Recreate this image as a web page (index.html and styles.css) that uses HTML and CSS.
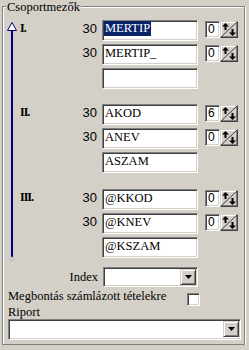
FILE: index.html
```html
<!DOCTYPE html>
<html lang="hu">

<head>
    <meta charset="UTF-8" />
    <title>Csoportmezők</title>
    <link rel="stylesheet" href="styles.css">
</head>

<body>
    <div class="frame">
        <span class="legend">Csoportmezők</span>

        <div class="groups">
            <div class="order">
                <svg class="order-head" width="17" height="9" viewBox="0 0 17 9">
                    <polygon points="9,0.5 13.5,8.5 4.5,8.5" fill="#fff" stroke="#000080" />
                </svg>
                <div class="order-line"></div>
                <svg class="order-end" width="7" height="6" viewBox="0 0 7 6">
                    <circle cx="3.5" cy="3" r="2" fill="none" stroke="#a8a8a8" stroke-dasharray="1 1" />
                </svg>
            </div>

            <div class="sections">
                <div class="section">
                    <b class="roman">I.</b>
                    <span class="num">30</span>
                    <div class="field sunken"><span class="sel">MERTIP</span></div>
                    <div class="spin">
                        <div class="spin-val sunken">0</div>
                        <div class="spin-btn raised">
                            <svg width="16" height="15" viewBox="0 0 16 15">
                                <line x1="0" y1="15" x2="16" y2="0" stroke="#404040" />
                                <polygon points="1,4.5 4.5,1 8,4.5" fill="#000" />
                                <rect x="3.5" y="4" width="2" height="4" fill="#000" />
                                <polygon points="8,10.5 11.5,14 15,10.5" fill="#000" />
                                <rect x="10.5" y="7" width="2" height="4" fill="#000" />
                            </svg>
                        </div>
                    </div>

                    <span class="num">30</span>
                    <div class="field sunken">MERTIP_</div>
                    <div class="spin">
                        <div class="spin-val sunken">0</div>
                        <div class="spin-btn raised">
                            <svg width="16" height="15" viewBox="0 0 16 15">
                                <line x1="0" y1="15" x2="16" y2="0" stroke="#404040" />
                                <polygon points="1,4.5 4.5,1 8,4.5" fill="#000" />
                                <rect x="3.5" y="4" width="2" height="4" fill="#000" />
                                <polygon points="8,10.5 11.5,14 15,10.5" fill="#000" />
                                <rect x="10.5" y="7" width="2" height="4" fill="#000" />
                            </svg>
                        </div>
                    </div>

                    <div class="field sunken"></div>
                </div>

                <div class="section">
                    <b class="roman">II.</b>
                    <span class="num">30</span>
                    <div class="field sunken">AKOD</div>
                    <div class="spin">
                        <div class="spin-val sunken">6</div>
                        <div class="spin-btn raised">
                            <svg width="16" height="15" viewBox="0 0 16 15">
                                <line x1="0" y1="15" x2="16" y2="0" stroke="#404040" />
                                <polygon points="1,4.5 4.5,1 8,4.5" fill="#000" />
                                <rect x="3.5" y="4" width="2" height="4" fill="#000" />
                                <polygon points="8,10.5 11.5,14 15,10.5" fill="#000" />
                                <rect x="10.5" y="7" width="2" height="4" fill="#000" />
                            </svg>
                        </div>
                    </div>

                    <span class="num">30</span>
                    <div class="field sunken">ANEV</div>
                    <div class="spin">
                        <div class="spin-val sunken">0</div>
                        <div class="spin-btn raised">
                            <svg width="16" height="15" viewBox="0 0 16 15">
                                <line x1="0" y1="15" x2="16" y2="0" stroke="#404040" />
                                <polygon points="1,4.5 4.5,1 8,4.5" fill="#000" />
                                <rect x="3.5" y="4" width="2" height="4" fill="#000" />
                                <polygon points="8,10.5 11.5,14 15,10.5" fill="#000" />
                                <rect x="10.5" y="7" width="2" height="4" fill="#000" />
                            </svg>
                        </div>
                    </div>

                    <div class="field sunken">ASZAM</div>
                </div>

                <div class="section">
                    <b class="roman">III.</b>
                    <span class="num">30</span>
                    <div class="field sunken">@KKOD</div>
                    <div class="spin">
                        <div class="spin-val sunken">0</div>
                        <div class="spin-btn raised">
                            <svg width="16" height="15" viewBox="0 0 16 15">
                                <line x1="0" y1="15" x2="16" y2="0" stroke="#404040" />
                                <polygon points="1,4.5 4.5,1 8,4.5" fill="#000" />
                                <rect x="3.5" y="4" width="2" height="4" fill="#000" />
                                <polygon points="8,10.5 11.5,14 15,10.5" fill="#000" />
                                <rect x="10.5" y="7" width="2" height="4" fill="#000" />
                            </svg>
                        </div>
                    </div>

                    <span class="num">30</span>
                    <div class="field sunken">@KNEV</div>
                    <div class="spin">
                        <div class="spin-val sunken">0</div>
                        <div class="spin-btn raised">
                            <svg width="16" height="15" viewBox="0 0 16 15">
                                <line x1="0" y1="15" x2="16" y2="0" stroke="#404040" />
                                <polygon points="1,4.5 4.5,1 8,4.5" fill="#000" />
                                <rect x="3.5" y="4" width="2" height="4" fill="#000" />
                                <polygon points="8,10.5 11.5,14 15,10.5" fill="#000" />
                                <rect x="10.5" y="7" width="2" height="4" fill="#000" />
                            </svg>
                        </div>
                    </div>

                    <div class="field sunken">@KSZAM</div>
                </div>
            </div>
        </div>

        <div class="index-row">
            <span class="index-label">Index</span>
            <div class="combo combo-index sunken">
                <div class="drop raised">
                    <svg width="7" height="4" viewBox="0 0 7 4"><polygon points="0,0 7,0 3.5,4" fill="#000" /></svg>
                </div>
            </div>
        </div>

        <div class="check-row">
            <span class="check-label">Megbontás számlázott tételekre</span>
            <div class="checkbox sunken"></div>
        </div>

        <div class="report-label">Riport</div>
        <div class="combo combo-report sunken">
            <div class="drop raised">
                <svg width="7" height="4" viewBox="0 0 7 4"><polygon points="0,0 7,0 3.5,4" fill="#000" /></svg>
            </div>
        </div>
    </div>
</body>

</html>
```

FILE: styles.css
```css
body {
    margin: 0;
    background-color: #d4d0c8;
    color: #000;
    font-family: "Liberation Serif", "Times New Roman", serif;
    font-size: 12.5px;
}

/* etched group frame */
.frame {
    position: relative;
    box-sizing: border-box;
    width: 243px;
    margin: 6px 0 0 2px;
    padding: 13px 3px 4px 0;
    border: 1px solid #808080;
    box-shadow: inset 1px 1px 0 #fff, 1px 1px 0 #fff;
}

.legend {
    position: absolute;
    top: -7px;
    left: 3px;
    padding: 0 1px;
    line-height: 15px;
    background-color: #d4d0c8;
}

/* win classic 3d borders */
.sunken {
    box-sizing: border-box;
    background-color: #fff;
    border: 1px solid;
    border-color: #808080 #fff #fff #808080;
    box-shadow: inset 1px 1px 0 #404040, inset -1px -1px 0 #d4d0c8;
}

.raised {
    box-sizing: border-box;
    background-color: #d4d0c8;
    border: 1px solid;
    border-color: #d4d0c8 #404040 #404040 #d4d0c8;
    box-shadow: inset 1px 1px 0 #fff, inset -1px -1px 0 #808080;
}

.groups {
    display: flex;
}

.order {
    display: flex;
    flex-direction: column;
    width: 17px;
    padding-top: 2px;
}

.order-head {
    display: block;
}

.order-line {
    flex: 1;
    width: 2px;
    margin-left: 8px;
    background-color: #000080;
}

.order-end {
    display: block;
    margin: -1px 0 -4px 5px;
}

.section {
    display: grid;
    grid-template-columns: 42px 40px 96px auto;
    grid-auto-rows: 21px;
    row-gap: 3px;
}

.section + .section {
    margin-top: 15px;
}

.section:last-child {
    margin-top: 16px;
}

.roman {
    grid-column: 1;
    font-size: 12px;
    letter-spacing: -1px;
    line-height: 17px;
}

.num {
    grid-column: 2;
    padding-right: 5px;
    text-align: right;
    font-family: "Liberation Sans", Arial, sans-serif;
    font-size: 13px;
    line-height: 17px;
}

.field {
    grid-column: 3;
    height: 21px;
    padding: 0 1px 0 2px;
    line-height: 17px;
    white-space: nowrap;
    overflow: hidden;
}

.sel {
    display: inline-block;
    vertical-align: top;
    margin-left: -1px;
    padding: 0 1px;
    line-height: 15px;
    background-color: #0a246a;
    color: #fff;
}

.spin {
    grid-column: 4;
    display: flex;
    align-self: start;
    height: 17px;
    margin: 1px 0 0 7px;
}

.spin-val {
    width: 15px;
    height: 17px;
    padding-left: 2px;
    font-family: "Liberation Sans", Arial, sans-serif;
    font-size: 12px;
    line-height: 15px;
}

.spin-btn {
    width: 18px;
    height: 17px;
}

.spin-btn svg {
    display: block;
}

.index-row {
    display: flex;
    align-items: center;
    height: 20px;
    margin-top: 9px;
}

.index-label {
    width: 95px;
    text-align: right;
}

.combo {
    display: flex;
    justify-content: flex-end;
    padding: 1px;
}

.combo-index {
    width: 95px;
    height: 20px;
    margin-left: 5px;
}

.combo-report {
    width: 233px;
    height: 21px;
    margin-left: 5px;
}

.drop {
    display: flex;
    align-items: center;
    justify-content: center;
    width: 16px;
    height: 16px;
}

.drop svg {
    display: block;
}

.check-row {
    display: flex;
    align-items: flex-start;
    margin-top: 2px;
    padding-left: 5px;
}

.check-label {
    width: 179px;
    line-height: 15px;
    white-space: nowrap;
}

.checkbox {
    width: 13px;
    height: 13px;
    margin-top: 4px;
}

.report-label {
    padding-left: 5px;
    line-height: 13px;
}
```
